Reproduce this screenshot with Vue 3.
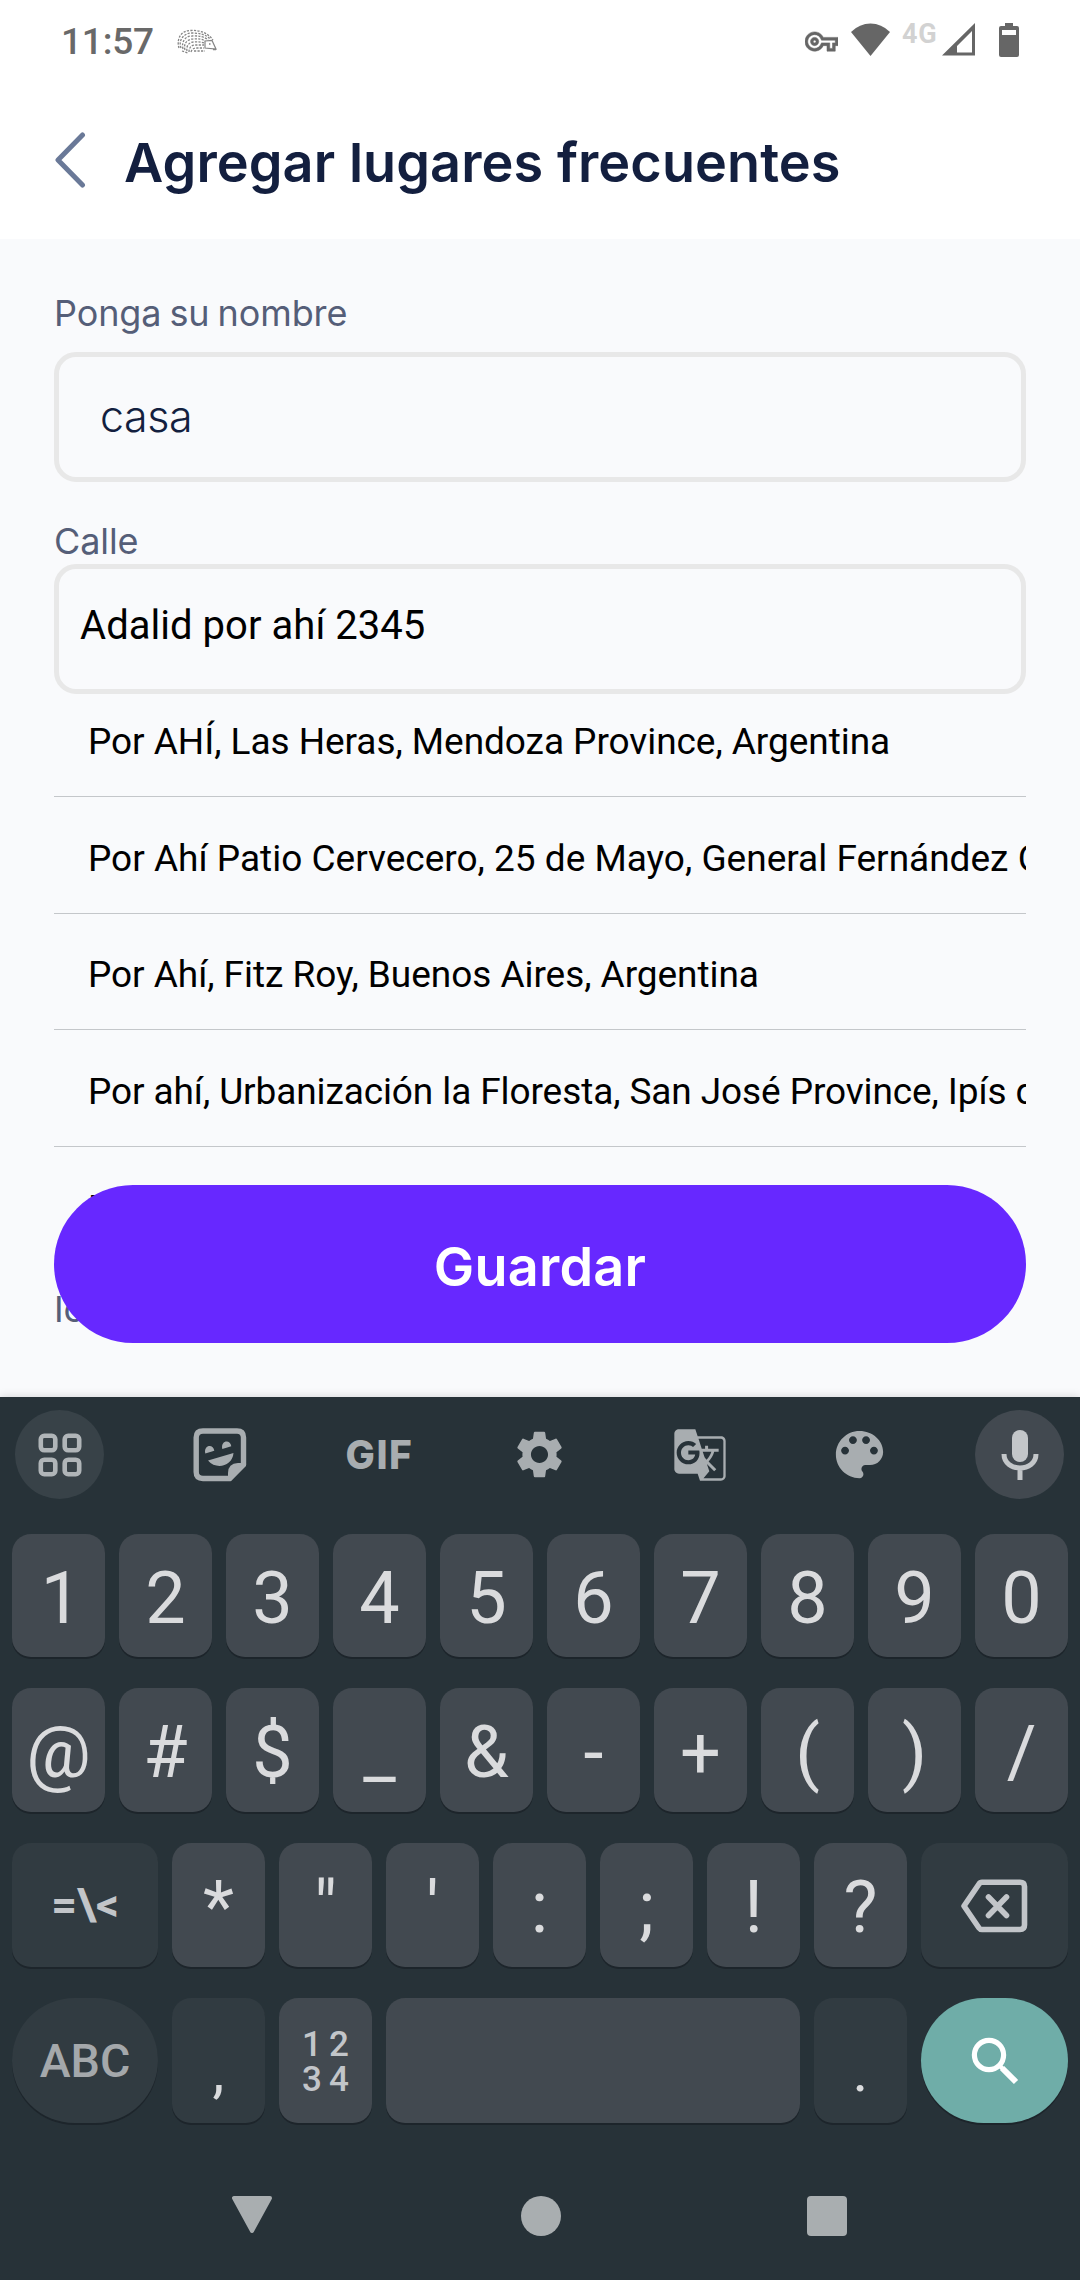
<script setup>
const places = [
  'Por AHÍ, Las Heras, Mendoza Province, Argentina',
  'Por Ahí Patio Cervecero, 25 de Mayo, General Fernández Oro, Río Negro, Argentina',
  'Por Ahí, Fitz Roy, Buenos Aires, Argentina',
  'Por ahí, Urbanización la Floresta, San José Province, Ipís de Goicoechea, Costa Rica',
  'Por Ahí',
]
const digits = ['1', '2', '3', '4', '5', '6', '7', '8', '9', '0']
const symbols = ['@', '#', '$', '_', '&', '-', '+', '(', ')', '/']
const marks = ['*', '"', "'", ':', ';', '!', '?']
</script>

<template>
  <div class="screen">
    <div class="status">
      <span class="time">11:57</span>
      <svg class="hedgehog" width="40" height="25" viewBox="0 0 40 25" fill="none" stroke="#858585">
        <g stroke-width="1.3" stroke-dasharray="2.2 1.3">
          <path d="M2 19C-1 9 5 1 14 1.500C23 1 31 4 36 11" />
          <path d="M4 19C1 11 7 4 15 4C23 4 30 6 33 10" />
          <path d="M6 20C4 12 9 7 15 7C22 6.500 28 8 31 11" />
          <path d="M8 21C6 14 11 10 16 10C21 9.500 25 10 28 12" />
          <path d="M10 22C9 17 12 13 17 13C21 12.500 24 13 27 14" />
          <path d="M12 23C12 19 14 16 18 16H27" />
          <path d="M14 23C15 20 17 19 20 19H27M17 22H28M5 22L11 24" />
        </g>
        <path d="M28 12L35 11.500L39 20L28 19Z" stroke-width="1.2" />
        <path d="M32 15h1.500M36 20.500h3" stroke-width="1.500" />
      </svg>
      <span class="spacer"></span>
      <svg class="key-icon" width="33" height="33" viewBox="0 0 24 24" fill="#666"><path stroke="#666" stroke-width=".4" d="M22 19h-6v-4h-2.680c-1.140 2.420-3.600 4-6.320 4-3.860 0-7-3.140-7-7s3.140-7 7-7c2.720 0 5.170 1.580 6.320 4H24v6h-2v4zm-4-2h2v-4h2v-2H11.940l-.23-.67C11.010 8.340 9.110 7 7 7c-2.760 0-5 2.240-5 5s2.240 5 5 5c2.110 0 4.010-1.340 4.710-3.330l.23-.67H18v4zM7 15c-1.650 0-3-1.350-3-3s1.350-3 3-3 3 1.350 3 3-1.350 3-3 3zm0-4c-.55 0-1 .45-1 1s.45 1 1 1 1-.45 1-1-.45-1-1-1z" /></svg>
      <svg class="wifi" width="39" height="33" viewBox="0 0 39 33" fill="#666"><path d="M0 9Q8.500 0.500 19.500 0.500T39 9L19.500 33Z" /></svg>
      <span class="net">4G</span>
      <svg class="signal" width="33" height="33" viewBox="0 0 33 33"><path fill="#666" fill-rule="evenodd" d="M33 0V32.500H0ZM30 8L15 23V29.500H30Z" /></svg>
      <svg class="battery" width="20" height="34" viewBox="0 0 20 34"><path fill="#666" fill-rule="evenodd" d="M6 0H14V3H18Q20 3 20 5V32Q20 34 18 34H2Q0 34 0 32V5Q0 3 2 3H6ZM3 7V12H17V7Z" /></svg>
    </div>

    <header class="header">
      <svg width="32" height="56" viewBox="0 0 32 56" fill="none" stroke="#6a7998" stroke-width="5" stroke-linecap="round" stroke-linejoin="round"><path d="M28.500 3L4 28L28.500 53" /></svg>
      <h1>Agregar lugares frecuentes</h1>
    </header>

    <main class="content">
      <div class="label first">Ponga su nombre</div>
      <div class="field name">casa</div>
      <div class="label street">Calle</div>
      <div class="field address">Adalid por ahí 2345</div>
      <ul class="places">
        <li v-for="p in places" :key="p">{{ p }}</li>
      </ul>
      <div class="label icon-label">Icono</div>
      <button class="save">Guardar</button>
    </main>

    <section class="keyboard">
      <div class="tools">
        <div class="tool round">
          <svg width="44" height="44" viewBox="0 0 44 44" fill="none" stroke="#b0b5b8" stroke-width="4.600">
            <rect x="2.800" y="2.800" width="14.500" height="14.500" rx="3.500" /><rect x="26.700" y="2.800" width="14.500" height="14.500" rx="3.500" />
            <rect x="2.800" y="26.700" width="14.500" height="14.500" rx="3.500" /><rect x="26.700" y="26.700" width="14.500" height="14.500" rx="3.500" />
          </svg>
        </div>
        <div class="tool">
          <svg width="54" height="54" viewBox="0 0 54 54">
            <path d="M10 3H44Q50.500 3 50.500 9.500V36L36.500 50.500H10Q3.200 50.500 3.200 44V9.500Q3.200 3 10 3Z" fill="none" stroke="#a8adb0" stroke-width="5.400" />
            <path d="M53 35H45Q35 35.500 35 45V53H38L53 38Z" fill="#a8adb0" />
            <path d="M12.300 25.500C10.300 16.800 20.500 15.500 21.300 22.800ZM29.300 20.900C27.300 12.200 37.500 10.900 38.300 18.200ZM15 32.500L40.500 25C39.500 38 23.500 42.500 15 32.500Z" fill="#a8adb0" />
          </svg>
        </div>
        <div class="tool gif">GIF</div>
        <div class="tool">
          <svg width="57" height="57" viewBox="0 0 24 24" fill="#a8adb0"><path d="M19.140 12.940c.04-.3.06-.61.06-.94 0-.32-.02-.64-.07-.94l2.030-1.580c.18-.14.23-.41.12-.61l-1.920-3.320c-.12-.22-.37-.29-.59-.22l-2.390.96c-.5-.38-1.030-.7-1.620-.94l-.36-2.540c-.04-.24-.24-.41-.48-.41h-3.840c-.24 0-.43.17-.47.41l-.36 2.540c-.59.24-1.130.57-1.620.94l-2.390-.96c-.22-.08-.47 0-.59.22L2.740 8.870c-.12.21-.08.47.12.61l2.030 1.580c-.05.3-.09.63-.09.94s.02.64.07.94l-2.030 1.580c-.18.14-.23.41-.12.61l1.920 3.320c.12.22.37.29.59.22l2.390-.96c.5.38 1.030.7 1.620.94l.36 2.540c.05.24.24.41.48.41h3.840c.24 0 .44-.17.47-.41l.36-2.540c.59-.24 1.130-.56 1.620-.94l2.390.96c.22.08.47 0 .59-.22l1.920-3.320c.12-.22.07-.47-.12-.61l-2.010-1.580zM12 15.600c-1.980 0-3.600-1.620-3.600-3.600s1.620-3.600 3.600-3.600 3.600 1.620 3.600 3.600-1.620 3.600-3.600 3.600z" /></svg>
        </div>
        <div class="tool">
          <svg width="56" height="56" viewBox="0 0 24 24" fill="#a8adb0"><path d="M21 4H11l-1-3H3c-1.100 0-2 .9-2 2v15c0 1.100.9 2 2 2h8l1 3h9c1.100 0 2-.9 2-2V6c0-1.100-.9-2-2-2zM7 16c-2.760 0-5-2.240-5-5s2.240-5 5-5c1.350 0 2.480.5 3.350 1.300L9.030 8.570c-.38-.36-1.040-.78-2.030-.78-1.740 0-3.150 1.440-3.150 3.210S5.260 14.210 7 14.210c2.010 0 2.840-1.440 2.920-2.410H7v-1.710h4.680c.07.31.12.61.12 1.020C11.800 13.970 9.890 16 7 16zm6.170-5.420h3.700c-.43 1.250-1.110 2.430-2.050 3.470-.31-.35-.6-.72-.86-1.100l-.79-2.370zm8.830 10.420c0 .55-.45 1-1 1H13.500l2.500-3-1.040-3.100 3.100 3.100.92-.92-3.300-3.250.02-.02c1.130-1.250 1.930-2.690 2.400-4.220H20v-1.300h-4.530V8h-1.290v1.290h-1.440L11.360 5H21c.55 0 1 .45 1 1v15z" /></svg>
        </div>
        <div class="tool">
          <svg width="63" height="63" viewBox="0 0 24 24" fill="#a8adb0"><path d="M12 3c-4.970 0-9 4.030-9 9s4.030 9 9 9c.83 0 1.500-.67 1.500-1.500 0-.39-.15-.74-.39-1.010-.23-.26-.38-.61-.38-.99 0-.83.67-1.500 1.500-1.500H16c2.760 0 5-2.240 5-5 0-4.420-4.030-8-9-8zm-5.500 9c-.83 0-1.500-.67-1.500-1.500S5.670 9 6.500 9 8 9.670 8 10.500 7.330 12 6.500 12zm3-4C8.670 8 8 7.330 8 6.500S8.670 5 9.500 5s1.500.67 1.500 1.500S10.330 8 9.500 8zm5 0c-.83 0-1.500-.67-1.500-1.500S13.670 5 14.500 5s1.500.67 1.500 1.500S15.330 8 14.500 8zm3 4c-.83 0-1.500-.67-1.500-1.500S16.670 9 17.500 9s1.500.67 1.500 1.500-.67 1.500-1.500 1.500z" /></svg>
        </div>
        <div class="tool round mic">
          <svg width="38" height="52" viewBox="0 0 38 52"><rect x="11" y="1" width="16" height="32" rx="8" fill="#c3c6c9" /><path d="M3 25C3 43.500 35 43.500 35 25M19 39V51" fill="none" stroke="#c3c6c9" stroke-width="5" /></svg>
        </div>
      </div>

      <div class="row row-1"><div v-for="k in digits" :key="k" class="key">{{ k }}</div></div>
      <div class="row row-2"><div v-for="k in symbols" :key="k" class="key">{{ k }}</div></div>
      <div class="row row-3">
        <div class="key wide dim more">=\&lt;</div>
        <div v-for="k in marks" :key="k" class="key">{{ k }}</div>
        <div class="key wide dim erase">
          <svg width="68" height="54" viewBox="0 0 68 54" fill="none" stroke="#c2c5c9" stroke-linejoin="round"><path d="M22 3.300H60Q64.500 3.300 64.500 7.500V46Q64.500 50.500 60 50.500H22Q20 50.500 19 49L4 27L19 5Q20 3.300 22 3.300Z" stroke-width="5.600" /><path d="M28.500 18L46.500 36.500M46.500 18L28.500 36.500" stroke-width="5.600" stroke-linecap="round" /></svg>
        </div>
      </div>
      <div class="row row-4">
        <div class="key wide dim pill abc">ABC</div>
        <div class="key dim punct">,</div>
        <div class="key numpad"><span>1</span><span>2</span><span>3</span><span>4</span></div>
        <div class="key space"></div>
        <div class="key dim punct">.</div>
        <div class="key wide pill search">
          <svg width="48" height="48" viewBox="0 0 48 48" fill="none" stroke="#fff"><circle cx="18" cy="18" r="14.600" stroke-width="5.200" /><path d="M31 31L45 45" stroke-width="6" /><path d="M28 28L33 33" stroke-width="4" /></svg>
        </div>
      </div>

      <nav class="nav">
        <svg width="44" height="42" viewBox="0 0 44 42"><path d="M4 3H40L22 36Z" fill="#a9aeb0" stroke="#a9aeb0" stroke-width="4" stroke-linejoin="round" /></svg>
        <span class="home"></span>
        <span class="recent"></span>
      </nav>
    </section>
  </div>
</template>

<style>
body { margin: 0; }
</style>

<style scoped>
* { box-sizing: border-box; }
.screen {
  width: 1080px; height: 2280px; display: flex; flex-direction: column; overflow: hidden;
  background: #f9fafc; font-family: Roboto, "Liberation Sans", sans-serif;
}
.status { height: 84px; display: flex; align-items: flex-start; background: #fff; padding: 0 61px; color: #696969; flex: none; }
.time { font-size: 37px; line-height: 84px; font-weight: 500; letter-spacing: -0.2px; }
.hedgehog { margin: 29px 0 0 23px; }
.spacer { flex: 1; }
.key-icon { margin-top: 25px; }
.wifi { margin: 23px 0 0 13px; }
.net { margin: 20px 0 0 12px; width: 36px; font-size: 27px; line-height: 28px; font-weight: 700; letter-spacing: 0.8px; color: #d2d2d2; white-space: nowrap; }
.signal { margin: 23px 0 0 4px; }
.battery { margin: 23px 0 0 24px; }

.header { height: 155px; flex: none; display: flex; align-items: center; background: #fff; padding-left: 54px; padding-top: 2px; }
.header svg { margin-top: -5px; }
h1 { margin: 0 0 0 38px; font: 600 54px/70px Inter, sans-serif; color: #131f3f; white-space: nowrap; letter-spacing: 0.08px; }

.content { position: relative; flex: 1; min-height: 0; overflow: hidden; padding: 51px 54px 0; display: flex; flex-direction: column; }
.label { font: 400 36px/46px Inter, sans-serif; color: #555e78; flex: none; letter-spacing: -0.1px; word-spacing: -2px; }
.first { margin-bottom: 16px; }
.street { margin-top: 36px; }
.field { height: 130px; flex: none; border: 5px solid #e8e8e8; border-radius: 22px; display: flex; align-items: center; }
.name { padding: 0 0 2px 41px; font: 300 43px/50px Inter, sans-serif; letter-spacing: -0.4px; color: #131f3f; }
.address { padding: 0 0 7px 21px; font-size: 40px; letter-spacing: 0.04px; color: #000; }
.places { list-style: none; margin: 0; padding: 0; flex: none; }
.places li {
  height: 116.700px; display: flex; align-items: flex-end; padding: 0 0 29px 34px; overflow: hidden;
  border-bottom: 1px solid #c4c7ca; font-size: 37px; line-height: 50px; color: #000; white-space: nowrap; letter-spacing: -0.05px;
}
.places li:first-child { height: 103px; }
.places li:nth-child(2) { letter-spacing: 0; }
.places li:nth-child(4) { letter-spacing: -0.1px; }
.places li:last-child { border-color: transparent; }
.icon-label { margin-top: 22px; }
.save {
  position: absolute; left: 54px; right: 54px; bottom: 54px; height: 158px; border: 0; border-radius: 79px;
  background: #6728ff; color: #fff; font: 600 54px/60px Inter, sans-serif; letter-spacing: 0.2px; padding: 6px 0 0;
}

.keyboard { position: relative; height: 883px; flex: none; background: #273238; padding: 13px 12px 0; display: flex; flex-direction: column; box-shadow: 0 0 9px rgba(0, 0, 0, .16); }
.tools { height: 89px; margin: 0 4px 0 3px; display: flex; justify-content: space-between; }
.tool { width: 89px; height: 89px; display: flex; align-items: center; justify-content: center; }
.round { border-radius: 50%; background: #384248; }
.mic { background: #424950; }
.gif { font: 800 39px/89px Inter, sans-serif; color: #a8adb0; letter-spacing: 1.6px; }

.row { display: flex; justify-content: space-between; height: 124px; margin-bottom: 31px; width: 1056px; flex: none; }
.row-1 { margin-top: 35px; height: 123px; }
.row-4 { height: 125px; }
.key {
  width: 93px; border-radius: 19px; background: #424950; color: #dadbdd; box-shadow: 0 2px 0 #1d252b;
  font-size: 72px; line-height: 130px; text-align: center; flex: none; height: 100%;
}
.row-1 .key:first-child { padding-left: 5px; }
.dim { background: #313b41; }
.wide { width: 147px; display: flex; align-items: center; justify-content: center; }
.pill { border-radius: 63px; }
.more { width: 146px; font-size: 45px; font-weight: 700; color: #c2c5c9; line-height: 124px; }
.erase { padding: 2px 2px 0 0; }
.abc { width: 146px; font-size: 46.500px; font-weight: 500; color: #a4a8ab; }
.punct { font-size: 60px; line-height: 145px; }
.numpad { display: grid; grid-template-columns: 27px 27px; grid-auto-rows: 35px; justify-content: center; align-content: center; font-size: 35px; font-weight: 500; line-height: 35px; color: #c2c5c9; padding-top: 3px; }
.space { width: 414px; }
.search { background: #6fada8; }
.nav { display: flex; align-items: center; justify-content: space-between; margin: 41px 0 0; padding: 0 221px 0 218px; height: 42px; }
.home { width: 40px; height: 40px; border-radius: 50%; background: #a9aeb0; }
.recent { width: 40px; height: 40px; border-radius: 4px; background: #a9aeb0; }
</style>
